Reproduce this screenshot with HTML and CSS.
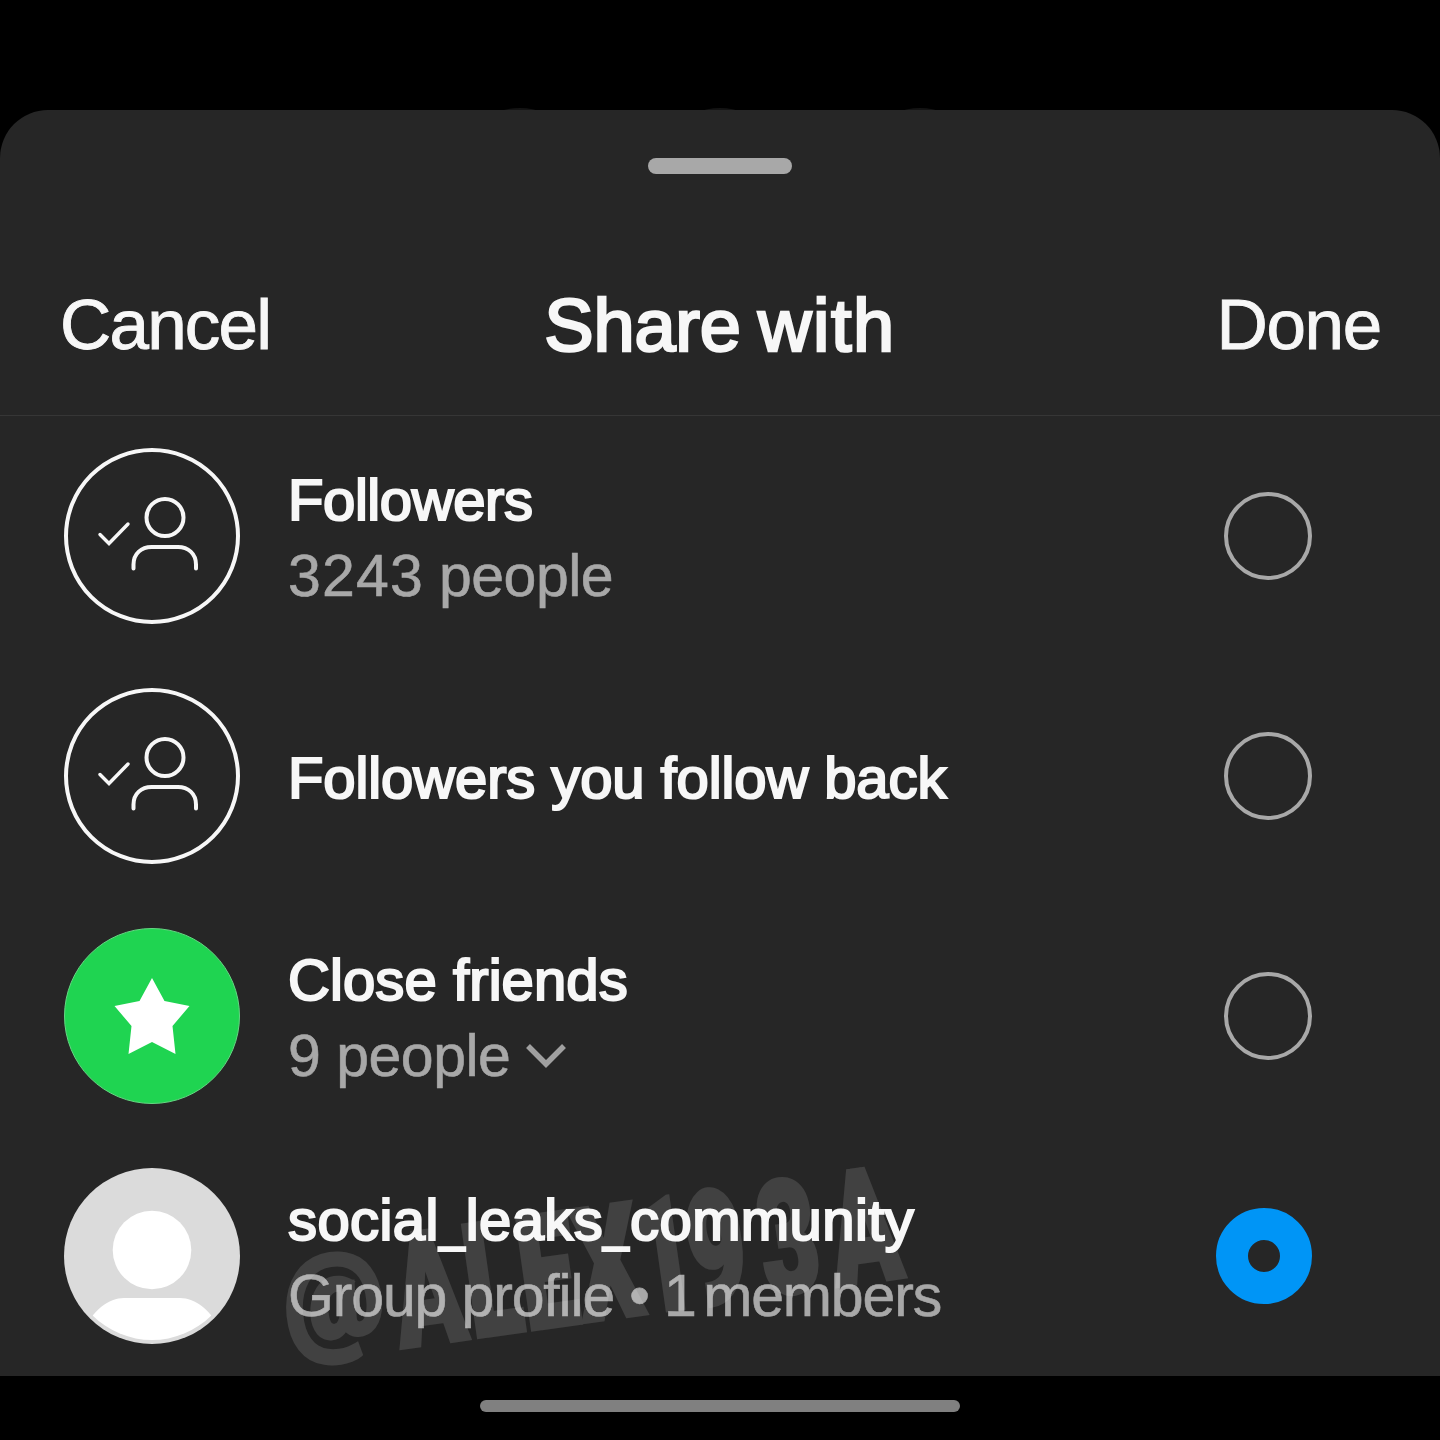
FILE: index.html
```html
<!DOCTYPE html>
<html lang="en">
<head>
<meta charset="utf-8">
<title>Share with</title>
<link rel="stylesheet" href="styles.css">
</head>
<body>
<div class="screen">
  <div class="backdrop"><i class="bump"></i><i class="bump"></i><i class="bump"></i></div>
  <main class="sheet">
    <div class="handle"></div>
    <header class="header">
      <span class="action cancel">Cancel</span>
      <h1 class="title">Share <span class="loose">with</span></h1>
      <span class="action done">Done</span>
    </header>
    <section class="list">
      <div class="row">
        <svg class="avatar" viewBox="0 0 176 176" fill="none" stroke="#f7f7f7" stroke-width="4">
          <circle cx="88" cy="88" r="86"/>
          <circle cx="101" cy="69.500" r="18.500"/>
          <path d="M69.500 120.500v-4c0-11 8-17.500 18-17.500h26.500c10 0 18 6.500 18 17.500v4" stroke-linecap="round"/>
          <path d="M36 86.500l9 9 19-19.500" stroke-width="3.400" stroke-linecap="round"/>
        </svg>
        <div class="info"><div class="name n1">Followers</div><div class="detail d1"><span><span class="digits">3243</span> people</span></div></div>
        <span class="radio"></span>
      </div>
      <div class="row">
        <svg class="avatar" viewBox="0 0 176 176" fill="none" stroke="#f7f7f7" stroke-width="4">
          <circle cx="88" cy="88" r="86"/>
          <circle cx="101" cy="69.500" r="18.500"/>
          <path d="M69.500 120.500v-4c0-11 8-17.500 18-17.500h26.500c10 0 18 6.500 18 17.500v4" stroke-linecap="round"/>
          <path d="M36 86.500l9 9 19-19.500" stroke-width="3.400" stroke-linecap="round"/>
        </svg>
        <div class="info"><div class="name n2">Followers you follow back</div></div>
        <span class="radio"></span>
      </div>
      <div class="row">
        <svg class="avatar" viewBox="0 0 176 176">
          <circle cx="88" cy="88" r="87.500" fill="#1fd451" stroke="#65d783"/>
          <path fill="#fff" d="M88 50l12.500 23 25 5-17 20 3 28-23.500-12-23.500 12 3-28-17-20 25-5z"/>
        </svg>
        <div class="info"><div class="name n3">Close friends</div>
          <div class="detail d3">9 people<svg class="chevron" viewBox="0 0 40 26"><path d="M2 3l18 18L38 3" fill="none" stroke="#a0a0a0" stroke-width="5.500"/></svg></div>
        </div>
        <span class="radio"></span>
      </div>
      <div class="row">
        <svg class="avatar" viewBox="0 0 176 176">
          <defs><clipPath id="inner"><circle cx="88" cy="88" r="84"/></clipPath></defs>
          <circle cx="88" cy="88" r="88" fill="#dbdbdb"/>
          <circle cx="88" cy="82" r="39.300" fill="#fff"/>
          <path clip-path="url(#inner)" fill="#fff" d="M20 176v-12C28 142 45 130 60 130h56c15 0 32 12 40 34v12z"/>
        </svg>
        <div class="info"><div class="name n4">social<span class="bar">_</span>leaks<span class="bar">_</span>community</div><div class="detail d4"><span>Group profile • <span class="one">1</span> members</span></div></div>
        <span class="radio selected"></span>
      </div>
    </section>
    <svg class="watermark" width="680" height="220" viewBox="260 1156 680 220">
      <text class="at" transform="translate(289 1343) rotate(-8.060) scale(.94 1)">@</text>
      <text transform="translate(401.500 1347.500) rotate(-8.060) scale(.64 1)" x="0 113 198 287 381 463 577 688" y="0">ALEX193A</text>
    </svg>
  </main>
  <footer class="navbar"><div class="home"></div></footer>
</div>
</body>
</html>
```
FILE: styles.css
```css
* { box-sizing: border-box; }
body { margin: 0; background: #000; font-family: "Liberation Sans", Arial, sans-serif; color: #f7f7f7; }
.screen { width: 1440px; height: 1440px; position: relative; overflow: hidden; display: flex; flex-direction: column; padding-top: 110px; }
.backdrop { position: absolute; top: 108px; left: 456px; display: flex; gap: 72px; }
.bump { width: 128px; height: 128px; border-radius: 50%; background: #141414; }
.sheet { position: relative; height: 1266px; background: #262626; border-radius: 48px 48px 0 0; padding-top: 48px; }
.handle { width: 144px; height: 16px; margin: 0 auto; border-radius: 8px; background: #a8a8a8; }
.header { height: 242px; padding: 101px 60px 0; display: grid; grid-template-columns: 1fr auto 1fr; border-bottom: 1px solid #363636; }
.action { font-size: 71px; line-height: 82px; padding-top: 9px; white-space: nowrap; -webkit-text-stroke: .9px currentColor; }
.cancel { letter-spacing: -1.8px; }
.done { justify-self: end; letter-spacing: -1.3px; margin-right: -1px; }
.title { margin: 0; font-size: 74px; line-height: 84px; padding-top: 9px; font-weight: 400; letter-spacing: -.2px; word-spacing: -3px; -webkit-text-stroke: 2.6px currentColor; }
.loose { letter-spacing: 1.5px; }
.row { height: 240px; display: flex; align-items: center; padding: 0 128px 0 64px; }
.avatar { width: 176px; height: 176px; flex: none; }
.info { flex: 1; margin-left: 48px; padding-top: 4px; white-space: nowrap; }
.name { font-size: 58px; line-height: 76px; -webkit-text-stroke: 2.2px currentColor; }
.detail { display: flex; align-items: center; font-size: 59px; line-height: 76px; color: #a8a8a8; -webkit-text-stroke: .6px currentColor; }
.n1 { letter-spacing: -.4px; }
.n2 { letter-spacing: -.1px; }
.n3 { letter-spacing: .1px; }
.n4 { letter-spacing: .4px; }
.bar { display: inline-block; width: 27px; letter-spacing: 0; transform: scaleX(.8); transform-origin: 0 50%; }
.d1 { letter-spacing: -.5px; word-spacing: -1px; }
.digits { letter-spacing: 1.2px; }
.d3 { letter-spacing: -.5px; }
.d4 { letter-spacing: -1.15px; }
.one { letter-spacing: -9px; }
.chevron { width: 40px; height: 26px; margin-left: 16px; }
.radio { width: 88px; height: 88px; border: 4px solid #a8a8a8; border-radius: 50%; }
.radio.selected { width: 96px; height: 96px; border: 32px solid #0095f6; }
.watermark { position: absolute; left: 260px; top: 1046px; fill: #fff; stroke: #fff; stroke-width: 5px; opacity: .12; font-family: Roboto, sans-serif; font-size: 157px; font-weight: 900; }
.at { font-size: 119px; }
.navbar { height: 64px; padding-top: 24px; }
.home { width: 480px; height: 12px; margin: 0 auto; border-radius: 6px; background: #808080; }
```
